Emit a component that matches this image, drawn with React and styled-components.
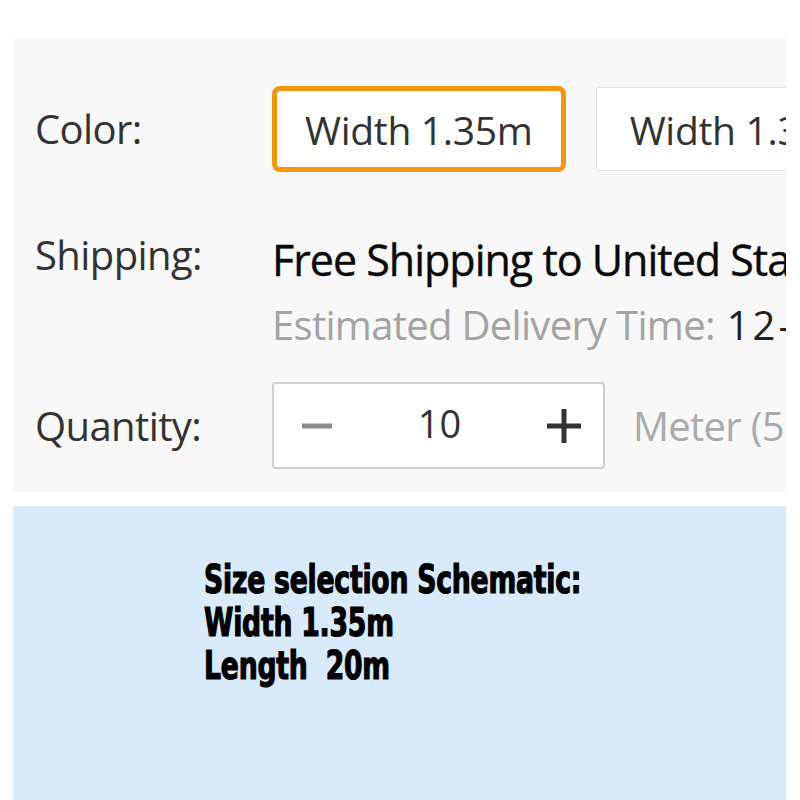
import React from 'react';
import styled, { createGlobalStyle } from 'styled-components';

const GlobalStyle = createGlobalStyle`
  html, body {
    margin: 0;
    padding: 0;
    background: #ffffff;
  }
  body {
    font-family: "Open Sans", "Noto Sans", sans-serif;
    overflow: hidden;
  }
`;

const StyledPage = styled.div`
  width: 800px;
  height: 800px;
  padding: 38px 14px 0 13px;
  box-sizing: border-box;
  display: flex;
  flex-direction: column;
  gap: 14px;
`;

const StyledOptionsPanel = styled.div`
  height: 454px;
  flex: none;
  background-color: #f8f8f8;
  overflow: hidden;
  padding: 48px 0 0 22px;
  box-sizing: border-box;
  display: flex;
  flex-direction: column;
`;

const StyledRow = styled.div`
  display: flex;
  align-items: ${(p) => p.$align || 'center'};
  margin-top: ${(p) => p.$top || 0}px;
  white-space: nowrap;
`;

const StyledLabel = styled.div`
  flex: none;
  width: 237px;
  font-size: 40px;
  line-height: 56px;
  color: #333333;
  letter-spacing: -0.6px;
  margin-top: ${(p) => p.$top || 0}px;
`;

const StyledOptions = styled.div`
  display: flex;
  align-items: center;
  gap: 30px;
`;

const StyledOption = styled.div`
  flex: none;
  height: ${(p) => (p.$active ? 86 : 84)}px;
  padding: 0 ${(p) => (p.$active ? 28 : 33)}px;
  box-sizing: border-box;
  display: flex;
  align-items: center;
  background-color: #ffffff;
  border: ${(p) => (p.$active ? '5px solid #f3960f' : '1px solid #e2e2e2')};
  border-radius: ${(p) => (p.$active ? 8 : 3)}px;
  font-size: 39px;
  color: #333333;
  letter-spacing: -0.3px;
`;

const StyledShipping = styled.div`
  display: flex;
  flex-direction: column;
  gap: 9px;
`;

const StyledShippingTitle = styled.div`
  font-size: 43px;
  line-height: 56px;
  color: #0a0a0a;
  letter-spacing: -1px;
  -webkit-text-stroke: 0.4px #0a0a0a;
`;

const StyledDelivery = styled.div`
  font-size: 40px;
  line-height: 56px;
  color: #a3a3a3;
  letter-spacing: -0.7px;

  b {
    font-weight: 400;
    color: #222222;
    margin-left: 12px;
    letter-spacing: 3px;
  }
`;

const StyledQuantityCell = styled.div`
  display: flex;
  align-items: center;
  gap: 28px;
`;

const StyledStepper = styled.div`
  flex: none;
  width: 333px;
  height: 87px;
  box-sizing: border-box;
  border: 2px solid #cfcfcf;
  border-radius: 4px;
  background-color: #ffffff;
  display: flex;
  align-items: center;
  justify-content: space-between;
  padding: 0 22px 0 26px;
`;

const StyledStepButton = styled.div`
  width: 34px;
  height: 34px;
  display: flex;
  align-items: center;
  justify-content: center;
`;

const StyledQty = styled.div`
  font-size: 38px;
  color: #333333;
  margin: 0 2px 6px 0;
`;

const StyledUnit = styled.div`
  font-size: 40px;
  color: #aaaaaa;
  letter-spacing: -0.7px;
`;

const StyledSchematic = styled.div`
  flex: 1;
  background-color: #d9eafb;
  padding: 52px 0 0 191px;
  font-family: "DejaVu Sans Condensed", "Liberation Sans", sans-serif;
  font-weight: 700;
  font-size: 39px;
  line-height: 43px;
  color: #000000;
  -webkit-text-stroke: 1.2px #000000;
  letter-spacing: -0.3px;
`;

const StyledSchematicLine = styled.div`
  white-space: pre;
  transform: scaleX(0.76);
  transform-origin: left center;
`;

const MinusIcon = () => (
  <svg width="32" height="8" viewBox="0 0 32 8">
    <rect x="1" y="1.5" width="30" height="5" fill="#8a8a8a" />
  </svg>
);

const PlusIcon = () => (
  <svg width="34" height="34" viewBox="0 0 34 34">
    <rect x="0" y="14.5" width="34" height="5" fill="#333333" />
    <rect x="14.5" y="0" width="5" height="34" fill="#333333" />
  </svg>
);

const App = () => {
  return (
    <>
      <GlobalStyle />
      <StyledPage>
        <StyledOptionsPanel>
          <StyledRow>
            <StyledLabel>Color:</StyledLabel>
            <StyledOptions>
              <StyledOption $active>Width 1.35m</StyledOption>
              <StyledOption>Width 1.35m</StyledOption>
            </StyledOptions>
          </StyledRow>

          <StyledRow $align="flex-start" $top={60}>
            <StyledLabel $top={-5}>Shipping:</StyledLabel>
            <StyledShipping>
              <StyledShippingTitle>Free Shipping to United States via ePacket</StyledShippingTitle>
              <StyledDelivery>
                Estimated Delivery Time:<b>12-20 days</b>
              </StyledDelivery>
            </StyledShipping>
          </StyledRow>

          <StyledRow $top={29}>
            <StyledLabel>Quantity:</StyledLabel>
            <StyledQuantityCell>
              <StyledStepper>
                <StyledStepButton>
                  <MinusIcon />
                </StyledStepButton>
                <StyledQty>10</StyledQty>
                <StyledStepButton>
                  <PlusIcon />
                </StyledStepButton>
              </StyledStepper>
              <StyledUnit>Meter (500 Meters available)</StyledUnit>
            </StyledQuantityCell>
          </StyledRow>
        </StyledOptionsPanel>

        <StyledSchematic>
          <StyledSchematicLine>Size selection Schematic:</StyledSchematicLine>
          <StyledSchematicLine>Width 1.35m</StyledSchematicLine>
          <StyledSchematicLine>Length  20m</StyledSchematicLine>
        </StyledSchematic>
      </StyledPage>
    </>
  );
};

export default App;
